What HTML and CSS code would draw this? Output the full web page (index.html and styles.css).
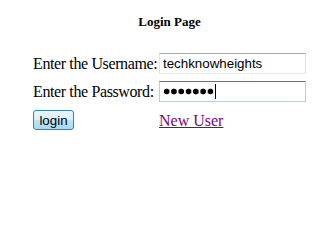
FILE: index.html
```html
<!DOCTYPE html>
<html lang="en">
<head>
  <meta charset="UTF-8">
  <title>Login Page</title>
  <link rel="stylesheet" href="styles.css">
</head>
<body>
  <div class="login-box">
    <h5 class="title">Login Page</h5>

    <form class="login-form">
      <label for="user">Enter the Username:</label>
      <input type="text" id="user" class="field" value="techknowheights">

      <label for="pass">Enter the Password:</label>
      <div class="field focused">
        <span class="dots"></span><span class="caret"></span>
      </div>

      <div><button type="button" class="login-btn">login</button></div>
      <a href="#" class="new-user">New User</a>
    </form>
  </div>
</body>
</html>
```

FILE: styles.css
```css
* {
  box-sizing: border-box;
}

body {
  margin: 0;
  background: #fff;
  color: #000;
  font-family: "Liberation Serif", "Times New Roman", serif;
}

.login-box {
  width: 273px;
  margin-left: 33px;
  padding-top: 14px;
}

.title {
  margin: 0 0 24px;
  font-size: 13px;
  line-height: 15px;
  text-align: center;
}

.login-form {
  display: grid;
  grid-template-columns: 126px 147px;
  grid-auto-rows: 21px;
  row-gap: 7px;
  font-size: 16px;
}

.login-form label {
  display: flex;
  align-items: center;
  white-space: nowrap;
  letter-spacing: -0.38px;
}

.field {
  height: 21px;
  width: 147px;
  margin: 0;
  padding: 0 3px;
  border: 1px solid #abadb3;
  border-left-color: #e2e3ea;
  border-right-color: #dbdfe6;
  border-bottom-color: #e3e9ef;
  font-family: "Liberation Sans", Arial, sans-serif;
  font-size: 13.33px;
  color: #000;
  background: #fff;
}

.focused {
  display: flex;
  align-items: center;
  border-color: #3d7bad;
  border-left-color: #b5cfe7;
  border-right-color: #b5cfe7;
  border-bottom-color: #b5cfe7;
}

.dots {
  display: inline-block;
  width: 51px;
  height: 7px;
  background: radial-gradient(circle, #000 2.6px, transparent 3.2px) 0 0 / 7.3px 7px repeat-x;
}

.caret {
  display: inline-block;
  width: 1px;
  height: 15px;
  margin-left: 1px;
  background: #000;
}

.login-btn {
  width: 41px;
  height: 20px;
  margin: 1px 0 0;
  padding: 0;
  border: 1px solid #3c7fb1;
  border-radius: 3px;
  background: linear-gradient(#eaf6fd, #d9f0fc 50%, #bee6fd 50%, #a7d9f5);
  font-family: "Liberation Sans", Arial, sans-serif;
  font-size: 13.33px;
  line-height: 15px;
  color: #000;
}

.new-user {
  align-self: center;
  color: #800080;
  padding-top: 3px;
}
```
